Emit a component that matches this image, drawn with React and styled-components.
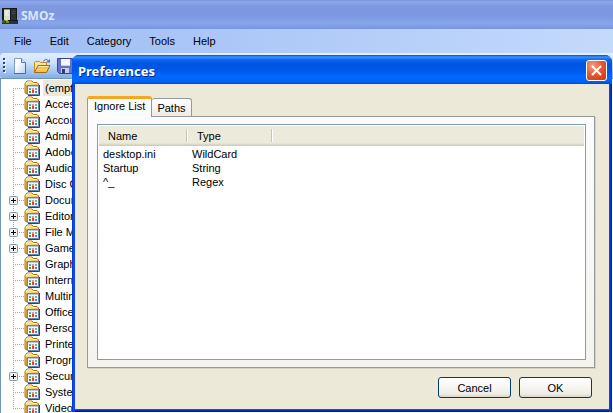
import React, { useState } from "react";
import styled, { createGlobalStyle } from "styled-components";

const Global = createGlobalStyle`
  * { box-sizing: border-box; }
  html, body { margin: 0; height: 100%; overflow: hidden; }
  body, button { font-family: "Liberation Sans", Arial, sans-serif; font-size: 11px; line-height: 14px; color: #000; }
  button { padding: 0; }
`;

const Window = styled.div`
  display: flex;
  flex-direction: column;
  height: 100vh;
  background: #fff;
`;

const TitleBar = styled.header`
  display: flex;
  align-items: center;
  gap: 3px;
  flex: none;
  height: 29px;
  padding: 2px 2px 0;
  background: linear-gradient(#7694de 0, #90aaea 2px, #7f98e0 6px, #7d98e1 16px, #87a5ea 23px, #7f9ce3 27px, #7794dc 29px);
`;

const AppTitle = styled.h1`
  margin: 0;
  font: bold 12px/16px "Noto Sans", sans-serif;
  color: #dbe5fa;
`;

const MenuBar = styled.nav`
  display: flex;
  align-items: center;
  flex: none;
  height: 24px;
  padding: 0 6px;
  background: linear-gradient(90deg, #9fbcf5, #c3dafb);
`;

const MenuItem = styled.button`
  height: 20px;
  margin-right: 2px;
  padding: 0 8px;
  border: 0;
  background: none;
`;

const Toolbar = styled.div`
  display: flex;
  align-items: center;
  gap: 6px;
  flex: none;
  height: 25px;
  padding-left: 3px;
  border-radius: 4px 0 0 4px;
  background: linear-gradient(#e2effe, #cbe0fd 40%, #84aee5);
`;

const ToolbarFrame = styled.div`
  flex: none;
  background: #a3bff5;
`;

const ToolButton = styled.button`
  display: flex;
  border: 0;
  background: none;
`;

const TreePane = styled.main`
  flex: 1;
  min-height: 0;
  overflow: hidden;
  border: solid #6f96bd;
  border-width: 1px 0 0 1px;
  background: #fff;
`;

const Tree = styled.ul`
  margin: 0;
  padding: 1px 0 0 8px;
  list-style: none;
`;

const TreeItem = styled.li`
  display: flex;
  align-items: center;
  height: 16px;
`;

const Branch = styled.svg`
  flex: none;
`;

const TreeLabel = styled.span`
  margin-left: 3px;
  padding: 1px 2px;
  line-height: 14px;
  background: ${(p) => (p.$selected ? "#ece9d8" : "none")};
`;

const Dialog = styled.section`
  position: fixed;
  inset: 55px 1px 1px 72px;
  display: flex;
  flex-direction: column;
  padding: 0 3px 3px;
  border-radius: 7px 7px 0 0;
  background: linear-gradient(90deg, #001fc4 0, #0a4fec 1px, #0a4fec 2px, #0841d8 3px, #0841d8 calc(100% - 3px), #0646e4 calc(100% - 2px), #001099 100%);
  overflow: hidden;
`;

const DialogTitle = styled.header`
  display: flex;
  align-items: center;
  justify-content: space-between;
  flex: none;
  height: 29px;
  margin: 0 -3px;
  padding: 2px 5px 0 6px;
  background: linear-gradient(#0a48cf 0, #3a92ff 2px, #0a63ee 5px, #0054e3 9px, #0058ea 16px, #0068ff 21px, #0066fb 26px, #0048d4 29px);
`;

const DialogHeading = styled.h2`
  margin: 0;
  font: bold 13px/16px "Noto Sans", sans-serif;
  color: #fff;
  text-shadow: 1px 1px #0a2a8c;
`;

const CloseButton = styled.button`
  display: flex;
  align-items: center;
  justify-content: center;
  width: 21px;
  height: 21px;
  border: 1px solid #fff;
  border-radius: 3px;
  background: radial-gradient(circle at 30% 25%, #f0a088, #e35a38 45%, #d23c0c 90%);
`;

const DialogBody = styled.div`
  display: flex;
  flex-direction: column;
  flex: 1;
  min-height: 0;
  padding: 12px 14px 11px 12px;
  background: #ece9d8;
  box-shadow: 0 1px #0a4fec, 0 2px #0230c8, 0 3px #001099;
`;

const TabList = styled.div`
  display: flex;
  align-items: flex-end;
  height: 21px;
  margin-bottom: -1px;
  z-index: 1;
`;

const Tab = styled.button`
  height: ${(p) => (p.$active ? 21 : 18)}px;
  margin-bottom: ${(p) => (p.$active ? 0 : 1)}px;
  padding: 0 ${(p) => (p.$active ? 6 : 5)}px ${(p) => (p.$active ? 4 : 0)}px;
  border: 1px solid #919b9c;
  border-width: ${(p) => (p.$active ? "3px 1px 0" : "1px 1px 0 0")};
  border-top-color: ${(p) => (p.$active ? "#f5a623" : "#919b9c")};
  border-radius: 3px 3px 0 0;
  background: ${(p) => (p.$active ? "#fcfcfc" : "linear-gradient(#fff, #ecebe6)")};
`;

const TabPanel = styled.div`
  flex: 1;
  min-height: 0;
  padding: 7px 8px 7px 9px;
  border: 1px solid #919b9c;
  background: linear-gradient(#fcfcfe, #f4f3ee);
  box-shadow: 1px 1px #d5d2c1;
`;

const ListBox = styled.div`
  height: 100%;
  padding: 1px;
  border: 1px solid #7f9db9;
  background: #fff;
`;

const Table = styled.table`
  width: 100%;
  table-layout: fixed;
  border-collapse: collapse;
`;

const HeadRow = styled.tr`
  height: 21px;
  background: linear-gradient(#ebeadb 0, #ebeadb 17px, #d6d2c2 19px, #cbc7b8 20px, #fff 20px);
`;

const HeadCell = styled.th`
  width: ${(p) => (p.$width ? p.$width + "px" : "auto")};
  padding: 0 9px 2px;
  font-weight: normal;
  text-align: left;
  background: ${(p) => (p.$width ? "linear-gradient(90deg, #c7c5b2 1px, #fff 1px) right 0 top 3px / 2px 13px no-repeat" : "none")};
`;

const Cell = styled.td`
  height: 14px;
  padding: 0 4px;
`;

const Actions = styled.footer`
  display: flex;
  justify-content: flex-end;
  gap: 8px;
  flex: none;
  padding: 9px 3px 0 0;
`;

const PushButton = styled.button`
  width: 73px;
  height: 21px;
  border: 1px solid #003c74;
  border-radius: 3px;
  background: linear-gradient(#fff, #f4f3ee 60%, #ecebe4 85%, #d9d3c6);
`;

const categories = [
  ["(empty)"], ["Accessories"], ["Accounting"], ["Administration"], ["Adobe"],
  ["Audio"], ["Disc Cloning"], ["Documents", true], ["Editors", true],
  ["File Management", true], ["Games", true], ["Graphics"], ["Internet"],
  ["Multimedia"], ["Office"], ["Personal"], ["Printers"], ["Programming"],
  ["Security", true], ["System"], ["Video"],
];

const ignored = [
  ["desktop.ini", "WildCard"],
  ["Startup", "String"],
  ["^_", "Regex"],
];

function AppIcon() {
  return (
    <svg width="16" height="16" viewBox="0 0 16 16" aria-hidden="true">
      <path d="M0 0h15v12h1v4H0z" fill="#15191c" />
      <path d="M2 1h6v11H2z" fill="#dddbc8" />
      <path d="M3 3h4M3 5h3M3 7h4" stroke="#f8f7ee" />
      <path d="M2 1.500h6" stroke="#8c8f80" />
      <path d="M9 1h5v11H9z" fill="#2a3235" />
      <path d="M10 3.500h3M10 5.500h3" stroke="#454f50" />
      <path d="M0 13h16v3H0z" fill="#29313a" />
      <path d="M0 12h3v3H0z" fill="#3c5a2c" />
      <path d="M4 13h3v2H4z" fill="#4f9c35" />
      <path d="M3 12h3v1H3z" fill="#c7a037" />
    </svg>
  );
}

function Grip() {
  return (
    <svg width="3" height="17" viewBox="0 0 3 17" aria-hidden="true">
      {[1, 5, 9, 13].map((y) => (
        <g key={y}>
          <path d={`M1 ${y + 1}h2v2H1z`} fill="#fff" />
          <path d={`M0 ${y}h2v2H0z`} fill="#27418f" />
        </g>
      ))}
    </svg>
  );
}

function NewIcon() {
  return (
    <svg width="16" height="16" viewBox="0 0 16 16" aria-hidden="true">
      <defs>
        <linearGradient id="paper" x1="0" y1="0" x2="1" y2="1">
          <stop offset="0.3" stopColor="#fff" />
          <stop offset="1" stopColor="#b9d2f2" />
        </linearGradient>
      </defs>
      <path d="M2.500.5h7l4 4v11h-11z" fill="url(#paper)" stroke="#7f9cc8" />
      <path d="M9.500.5v4h4" fill="#d5e4f7" stroke="#587aa9" />
      <path d="M2 15.500h11.500V5" fill="none" stroke="#4a6ca0" />
    </svg>
  );
}

function OpenIcon() {
  return (
    <svg width="17" height="16" viewBox="0 0 17 16" aria-hidden="true">
      <path d="M.500 14V4.500l1-1h4l1 1h6V8" fill="#fbe29a" stroke="#c08a2e" />
      <path d="M.500 14.500l3.500-7h12l-3.500 7z" fill="#f6c24e" stroke="#a06c1c" />
      <path d="M4.500 8.500h10" stroke="#ffe79a" />
      <path d="M3 11.500h10" stroke="#fad577" />
      <path d="M9.500 3.500q2-4 5-.5" fill="none" stroke="#54749c" />
      <path d="M12 4.500h4V1z" fill="#54749c" />
    </svg>
  );
}

function SaveIcon() {
  return (
    <svg width="16" height="16" viewBox="0 0 16 16" aria-hidden="true">
      <path d="M.500.5h15v15h-13l-2-2z" fill="#6673c4" stroke="#3a4494" />
      <path d="M4 1h9v7H4z" fill="#f3f6ff" />
      <path d="M4 7.500h9" stroke="#c4cdec" />
      <path d="M4 10h8v5H4z" fill="#c8cede" />
      <path d="M5 11h3v4H5z" fill="#303b83" />
    </svg>
  );
}

function FolderIcon() {
  return (
    <svg width="16" height="16" viewBox="0 0 16 16" aria-hidden="true">
      <defs>
        <linearGradient id="folder" x1="0" y1="0" x2="1" y2="1">
          <stop offset="0" stopColor="#fff0a0" />
          <stop offset="1" stopColor="#e2a636" />
        </linearGradient>
      </defs>
      <path d="M4 15.500h11.500V5" fill="none" stroke="#33485e" />
      <path d="M1 13V3.500L3 1h5l1.500 1.500H13l1.500 1.500V14H3z" fill="url(#folder)" stroke="#a87420" />
      <path d="M2 4l1.500-2H7.500L9 3.500h4" fill="none" stroke="#fff5b8" />
      <path d="M1.500 4v8.500l2 2V6z" fill="#d19a33" />
      <path d="M3.500 5.500h11v9h-11z" fill="#f4f6fa" stroke="#6485ad" />
      <path d="M4 6.500h10" stroke="#a9c8ec" />
      <path d="M5 8h2v2H5z" fill="#6dab68" />
      <path d="M5 11h2v2H5z" fill="#4d8d55" />
      <path d="M8 8h2v2H8z" fill="#d89b95" />
      <path d="M8 10h2v3H8z" fill="#d14a3a" />
      <path d="M11 8h2v2h-2z" fill="#df8d51" />
      <path d="M11 11h2v2h-2z" fill="#5785bd" />
    </svg>
  );
}

function TreeBranch({ first, last, expandable }) {
  return (
    <Branch width="15" height="16" viewBox="0 0 15 16" aria-hidden="true">
      <path d={`M4.500 ${first ? 8 : 0}V${last ? 9 : 16}`} stroke="#aca899" strokeDasharray="1 1" />
      <path d="M4 8.500h11" stroke="#aca899" strokeDasharray="1 1" />
      {expandable && (
        <g>
          <rect x=".5" y="4.500" width="8" height="8" rx="1" fill="#f1efe7" stroke="#7898b5" />
          <path d="M2 8.500h5M4.500 6v5" stroke="#000" />
        </g>
      )}
    </Branch>
  );
}

function IgnoreTable() {
  return (
    <Table>
      <thead>
        <HeadRow>
          <HeadCell $width={89}>Name</HeadCell>
          <HeadCell $width={85}>Type</HeadCell>
          <HeadCell aria-hidden="true" />
        </HeadRow>
      </thead>
      <tbody>
        {ignored.map(([name, type]) => (
          <tr key={name}>
            <Cell>{name}</Cell>
            <Cell>{type}</Cell>
          </tr>
        ))}
      </tbody>
    </Table>
  );
}

export default function App() {
  const [tab, setTab] = useState("ignore");
  return (
    <Window>
      <Global />
      <TitleBar>
        <AppIcon />
        <AppTitle>SMOz</AppTitle>
      </TitleBar>
      <MenuBar>
        {["File", "Edit", "Category", "Tools", "Help"].map((label) => (
          <MenuItem key={label}>{label}</MenuItem>
        ))}
      </MenuBar>
      <ToolbarFrame>
        <Toolbar>
          <Grip />
          <ToolButton aria-label="New"><NewIcon /></ToolButton>
          <ToolButton aria-label="Open"><OpenIcon /></ToolButton>
          <ToolButton aria-label="Save"><SaveIcon /></ToolButton>
        </Toolbar>
      </ToolbarFrame>
      <TreePane>
        <Tree>
          {categories.map(([label, expandable], i) => (
            <TreeItem key={label}>
              <TreeBranch first={i === 0} last={i === categories.length - 1} expandable={expandable} />
              <FolderIcon />
              <TreeLabel $selected={i === 0}>{label}</TreeLabel>
            </TreeItem>
          ))}
        </Tree>
      </TreePane>
      <Dialog role="dialog" aria-labelledby="preferences-title">
        <DialogTitle>
          <DialogHeading id="preferences-title">Preferences</DialogHeading>
          <CloseButton aria-label="Close">
            <svg width="11" height="11" viewBox="0 0 11 11" aria-hidden="true">
              <path d="M1 1l9 9M10 1l-9 9" stroke="#fff" strokeWidth="2" />
            </svg>
          </CloseButton>
        </DialogTitle>
        <DialogBody>
          <TabList role="tablist">
            <Tab role="tab" aria-selected={tab === "ignore"} $active={tab === "ignore"} onClick={() => setTab("ignore")}>
              Ignore List
            </Tab>
            <Tab role="tab" aria-selected={tab === "paths"} $active={tab === "paths"} onClick={() => setTab("paths")}>
              Paths
            </Tab>
          </TabList>
          <TabPanel role="tabpanel">
            <ListBox>{tab === "ignore" && <IgnoreTable />}</ListBox>
          </TabPanel>
          <Actions>
            <PushButton>Cancel</PushButton>
            <PushButton>OK</PushButton>
          </Actions>
        </DialogBody>
      </Dialog>
    </Window>
  );
}
